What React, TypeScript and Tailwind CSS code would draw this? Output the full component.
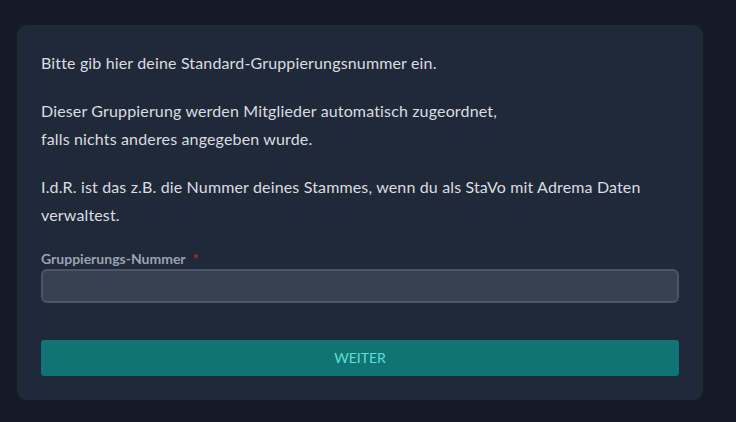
export default function App() {
  return (
    <div className="min-h-[422px] w-full bg-[#141a27] pt-[25px] pl-[17px] font-['Lato',sans-serif]">
      <div className="w-[686px] rounded-[10px] bg-[#202938] px-6 pt-[24px] pb-[24px] text-[16px] leading-7 tracking-[0.15px] text-[#d9dde3]">
        <p className="mb-5">Bitte gib hier deine Standard-Gruppierungsnummer ein.</p>
        <p className="mb-5">
          Dieser Gruppierung werden Mitglieder automatisch zugeordnet,
          <br />
          falls nichts anderes angegeben wurde.
        </p>
        <p className="mb-5">
          I.d.R. ist das z.B. die Nummer deines Stammes, wenn du als StaVo mit Adrema Daten verwaltest.
        </p>
        <label className="flex items-center gap-[7px] text-[14px] font-bold leading-5 tracking-normal text-[#9aa3af]">
          Gruppierungs-Nummer
          <span className="text-[#c81e2e]">*</span>
        </label>
        <input
          type="text"
          className="mt-0 block h-[34px] w-full rounded-md border-2 border-[#4b5565] bg-[#374151] px-3 text-[14px] text-white outline-none"
        />
        <button className="mt-[37px] block h-9 w-full rounded-[3px] bg-[#107474] text-[14px] uppercase tracking-normal text-[#5ee0d5]">
          Weiter
        </button>
      </div>
    </div>
  );
}
